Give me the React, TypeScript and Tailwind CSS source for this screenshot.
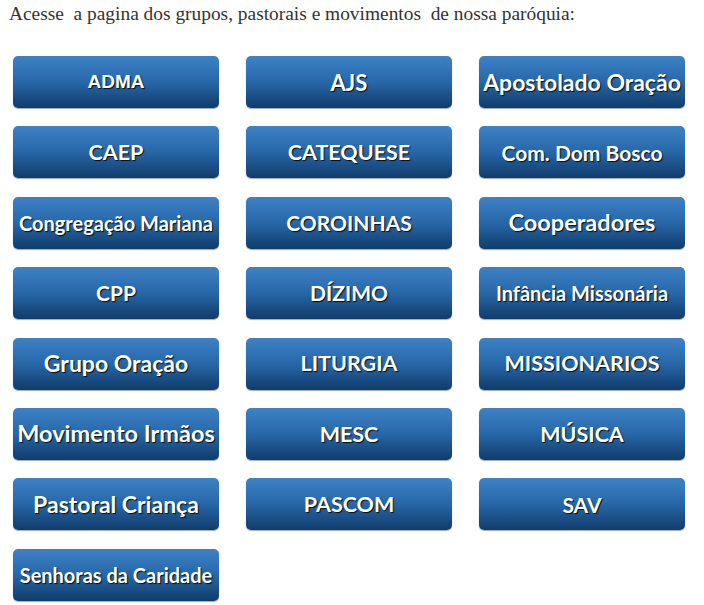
import React from 'react';

type Item = { label: string; size: string; font?: string };

const items: Item[] = [
  { label: 'ADMA', size: 'text-[19px]', font: 'arial' },
  { label: 'AJS', size: 'text-[22px]' },
  { label: 'Apostolado Oração', size: 'text-[23px]' },
  { label: 'CAEP', size: 'text-[21.5px]' },
  { label: 'CATEQUESE', size: 'text-[21.5px]' },
  { label: 'Com. Dom Bosco', size: 'text-[21px]' },
  { label: 'Congregação Mariana', size: 'text-[20px]' },
  { label: 'COROINHAS', size: 'text-[21px]' },
  { label: 'Cooperadores', size: 'text-[23.5px]' },
  { label: 'CPP', size: 'text-[21px]' },
  { label: 'DÍZIMO', size: 'text-[21px]' },
  { label: 'Infância Missonária', size: 'text-[20px]' },
  { label: 'Grupo Oração', size: 'text-[23px]' },
  { label: 'LITURGIA', size: 'text-[21.5px]' },
  { label: 'MISSIONARIOS', size: 'text-[21.5px]' },
  { label: 'Movimento Irmãos', size: 'text-[23.5px]' },
  { label: 'MESC', size: 'text-[21.5px]' },
  { label: 'MÚSICA', size: 'text-[21.5px]' },
  { label: 'Pastoral Criança', size: 'text-[23px]' },
  { label: 'PASCOM', size: 'text-[21.5px]' },
  { label: 'SAV', size: 'text-[21px]' },
  { label: 'Senhoras da Caridade', size: 'text-[20px]' },
];

const GroupButton = ({ item }: { item: Item }) => (
  <a
    href="#"
    className={`flex h-[52px] w-[206px] items-center justify-center whitespace-nowrap rounded-[5px] bg-gradient-to-b from-[#3d82c6] via-[#2767a8] to-[#113c6a] font-bold text-white shadow-[0_1px_1px_rgba(0,0,0,0.35)] [text-shadow:1px_1px_1px_rgba(0,0,0,0.85)] ${item.size} ${
      item.font === 'arial' ? "font-['Liberation_Sans',sans-serif]" : "font-['Lato',sans-serif]"
    }`}
  >
    {item.label}
  </a>
);

const App = () => {
  return (
    <div className="min-h-[605px] w-[704px] bg-white">
      <p className="whitespace-pre pl-[9px] pt-[2px] font-['Liberation_Serif',serif] text-[19.4px] leading-[23px] text-[#333]">
        {'Acesse  a pagina dos grupos, pastorais e movimentos  de nossa paróquia:'}
      </p>
      <div className="ml-[13px] mt-[31px] grid w-fit grid-cols-[206px_206px_206px] gap-x-[27px] gap-y-[18.4px]">
        {items.map(item => (
          <GroupButton key={item.label} item={item} />
        ))}
      </div>
    </div>
  );
};

export default App;
